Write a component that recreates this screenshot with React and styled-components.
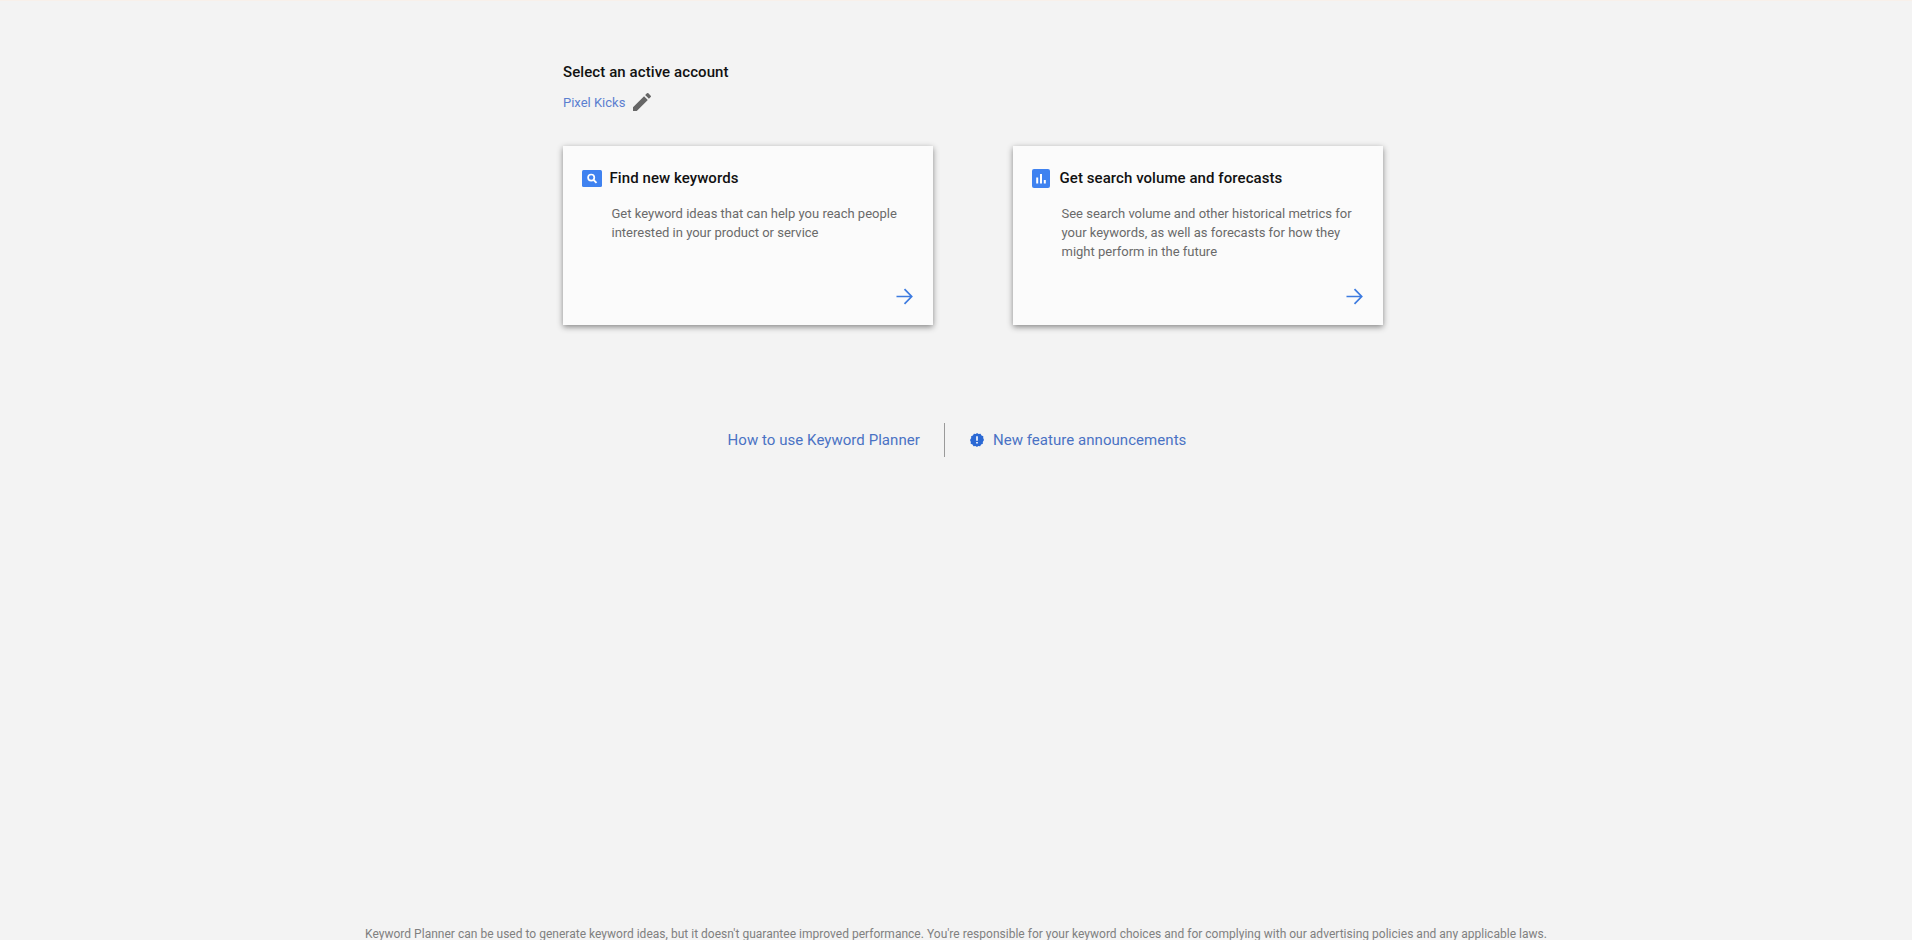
import React from 'react';
import styled, { createGlobalStyle } from 'styled-components';

const GlobalStyle = createGlobalStyle`
  html, body {
    margin: 0;
    padding: 0;
    height: 100%;
    overflow: hidden;
    background: #f3f3f3;
  }
  body {
    font-family: Roboto, "Liberation Sans", sans-serif;
  }
`;

const Page = styled.div`
  height: 940px;
  display: flex;
  flex-direction: column;
  border-top: 1px solid #f8f0ea;
  box-sizing: border-box;
  overflow: hidden;
`;

const Content = styled.main`
  width: 820px;
  margin-left: 563px;
  padding-top: 61px;
`;

const Heading = styled.h1`
  margin: 0;
  font-size: 15px;
  line-height: 20px;
  font-weight: 500;
  letter-spacing: 0.09px;
  color: #111;
`;

const AccountRow = styled.div`
  display: flex;
  align-items: center;
  gap: 5px;
  margin-top: 8px;
  height: 24px;
`;

const AccountLink = styled.a`
  font-size: 13px;
  color: #5b7fd0;
`;

const Cards = styled.div`
  display: grid;
  grid-template-columns: 370px 370px;
  column-gap: 80px;
  margin-top: 32px;
`;

const Card = styled.section`
  height: 179px;
  box-sizing: border-box;
  padding: 23px 20px 0 19px;
  background: #fbfbfb;
  box-shadow: 0 2px 6px rgba(0, 0, 0, 0.45);
  display: flex;
  flex-direction: column;
`;

const CardHeader = styled.div`
  display: flex;
  align-items: center;
  gap: ${(p) => p.$gap}px;
  height: 18px;
`;

const CardTitle = styled.h2`
  margin: 0;
  font-size: 15px;
  line-height: 18px;
  font-weight: 500;
  letter-spacing: 0.07px;
  color: #111;
`;

const CardText = styled.p`
  margin: 17px 0 0 29.5px;
  font-size: 13px;
  line-height: 19px;
  color: #6a6a6a;
`;

const ArrowSlot = styled.div`
  margin-top: auto;
  margin-bottom: 20px;
  display: flex;
  justify-content: flex-end;
`;

const Links = styled.nav`
  display: flex;
  justify-content: center;
  align-items: center;
  height: 34px;
  margin-top: 98px;
  padding-left: 2px;
`;

const HelpLink = styled.a`
  display: flex;
  align-items: center;
  gap: 8px;
  font-size: 15px;
  letter-spacing: 0.05px;
  color: #4a72c4;
`;

const Divider = styled.div`
  width: 1px;
  height: 34px;
  margin: 0 24px;
  background: #9a9a9a;
`;

const Footer = styled.footer`
  margin-top: auto;
  height: 13px;
  font-size: 12px;
  line-height: 14px;
  letter-spacing: 0.016px;
  text-align: center;
  white-space: nowrap;
  color: #808080;
`;

const PencilIcon = () => (
  <svg width="24" height="24" viewBox="0 0 24 24" fill="#666">
    <path d="M3 17.25V21h3.75L17.81 9.94l-3.75-3.75L3 17.25zM20.71 7.04a1 1 0 0 0 0-1.41l-2.34-2.34a1 1 0 0 0-1.41 0l-1.83 1.83 3.75 3.75 1.83-1.83z" />
  </svg>
);

const SearchBadge = () => (
  <svg width="20" height="17" viewBox="0 0 20 17">
    <rect width="20" height="17" rx="1.5" fill="#3f82f0" />
    <circle cx="9.2" cy="7.6" r="3.1" fill="none" stroke="#fff" strokeWidth="1.7" />
    <path d="M11.5 9.9l3 3" stroke="#fff" strokeWidth="1.9" />
  </svg>
);

const ChartBadge = () => (
  <svg width="18" height="19" viewBox="0 0 18 19">
    <rect width="18" height="19" rx="2" fill="#3f82f0" />
    <path d="M4.2 8.5h2v6h-2zM8 5h2v9.5H8zM11.8 11h2v3.5h-2z" fill="#fff" />
  </svg>
);

const ArrowIcon = () => (
  <svg width="17" height="17" viewBox="0 0 17 17" fill="none" stroke="#3d7be0" strokeWidth="1.7">
    <path d="M0.5 8.5h15M8.5 1.2l7.2 7.3-7.2 7.3" />
  </svg>
);

const AnnouncementIcon = () => (
  <svg width="16" height="16" viewBox="0 0 16 16">
    <path
      d="M8 1l1.6 1.1 1.9-.3 1 1.7 1.8.7-.1 1.9L15 8l-1.2 1.9.1 1.9-1.8.7-1 1.7-1.9-.3L8 15l-1.6-1.1-1.9.3-1-1.7-1.8-.7.1-1.9L1 8l1.2-1.9-.1-1.9 1.8-.7 1-1.7 1.9.3z"
      fill="#2a68d4"
    />
    <path d="M7.2 4.2h1.6v4.6H7.2zM7.2 10h1.6v1.6H7.2z" fill="#fff" />
  </svg>
);

const App = () => {
  return (
    <Page>
      <GlobalStyle />
      <Content>
        <Heading>Select an active account</Heading>
        <AccountRow>
          <AccountLink>Pixel Kicks</AccountLink>
          <PencilIcon />
        </AccountRow>
        <Cards>
          <Card>
            <CardHeader $gap={7.5}>
              <SearchBadge />
              <CardTitle>Find new keywords</CardTitle>
            </CardHeader>
            <CardText>
              Get keyword ideas that can help you reach people
              <br />
              interested in your product or service
            </CardText>
            <ArrowSlot>
              <ArrowIcon />
            </ArrowSlot>
          </Card>
          <Card>
            <CardHeader $gap={9.5}>
              <ChartBadge />
              <CardTitle>Get search volume and forecasts</CardTitle>
            </CardHeader>
            <CardText>
              See search volume and other historical metrics for
              <br />
              your keywords, as well as forecasts for how they
              <br />
              might perform in the future
            </CardText>
            <ArrowSlot>
              <ArrowIcon />
            </ArrowSlot>
          </Card>
        </Cards>
      </Content>
      <Links>
        <HelpLink>How to use Keyword Planner</HelpLink>
        <Divider />
        <HelpLink>
          <AnnouncementIcon />
          New feature announcements
        </HelpLink>
      </Links>
      <Footer>
        Keyword Planner can be used to generate keyword ideas, but it doesn't guarantee improved performance. You're responsible for your keyword choices and for complying with our advertising policies and any applicable laws.
      </Footer>
    </Page>
  );
};

export default App;
